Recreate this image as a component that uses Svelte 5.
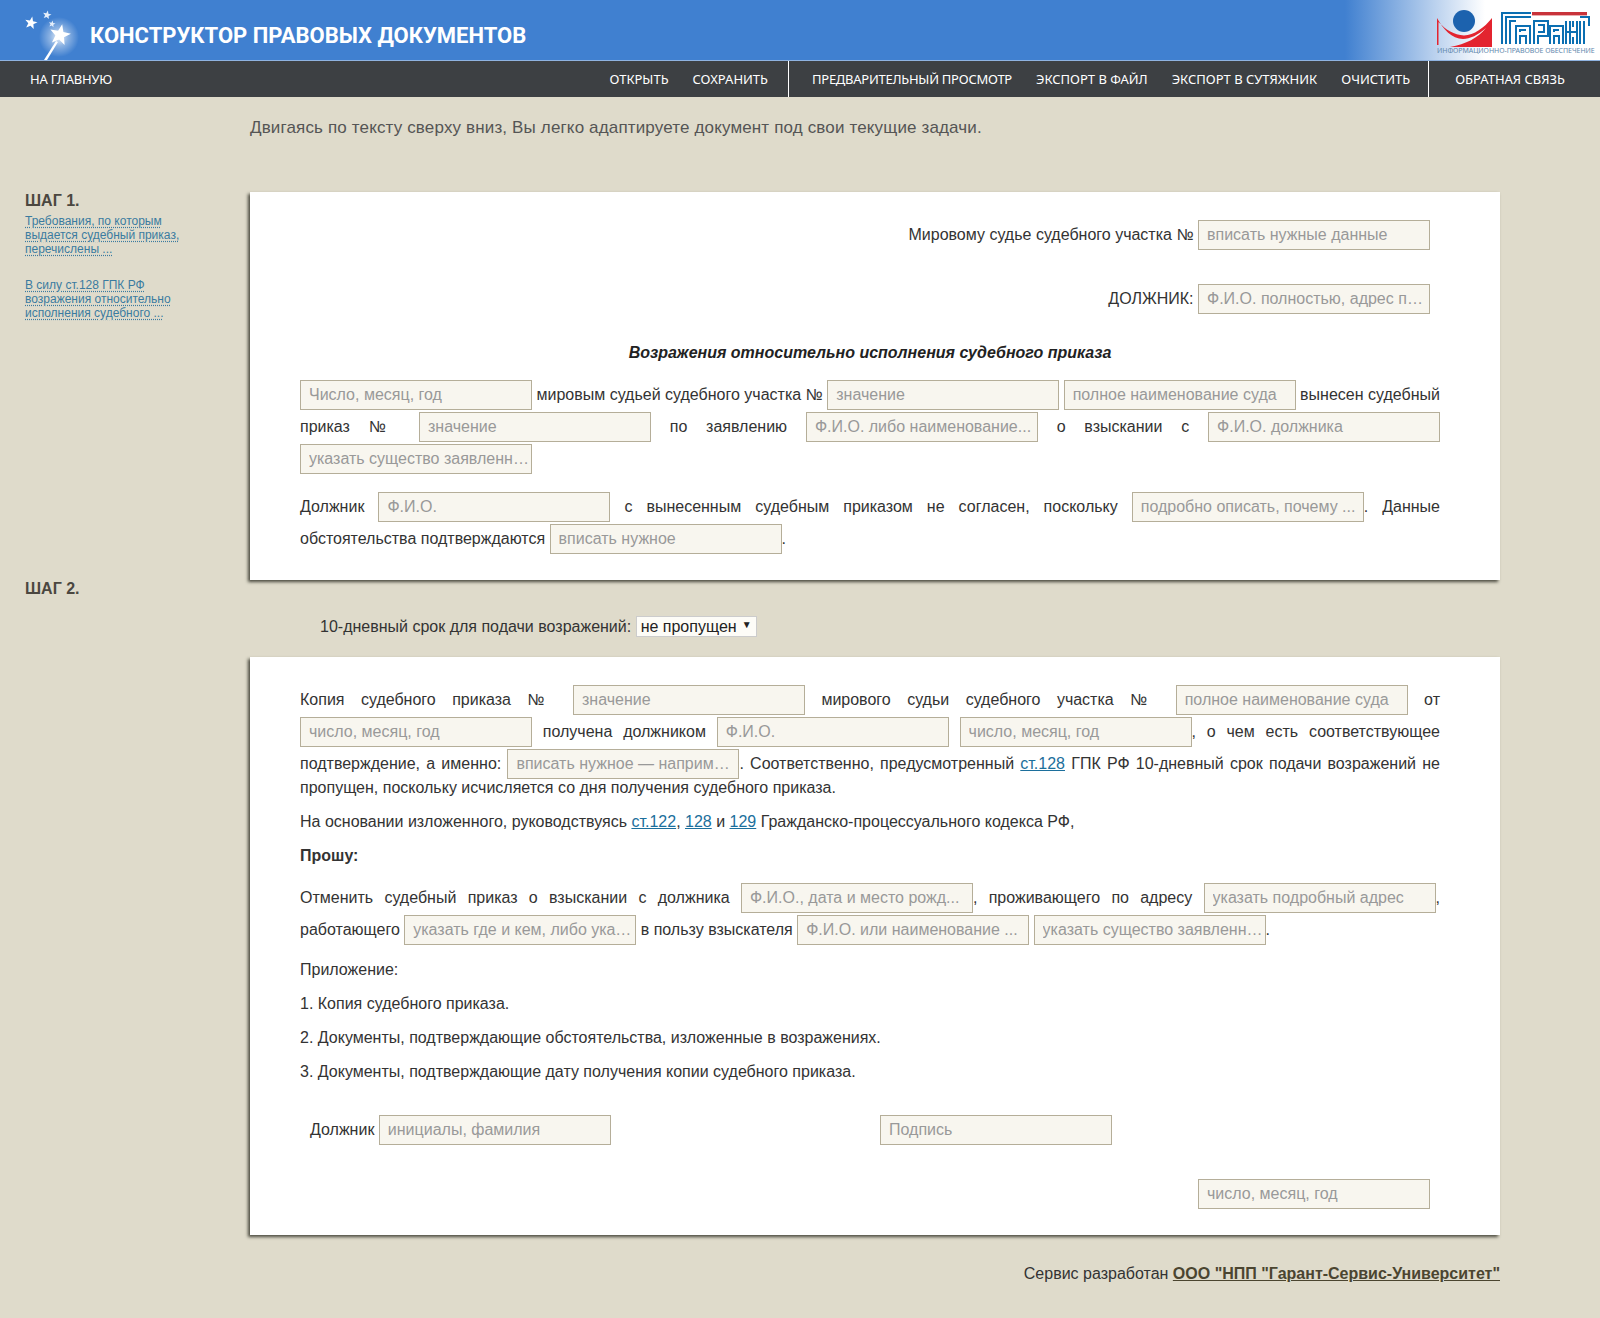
<script>
  const navGroups = [
    ['ОТКРЫТЬ', 'СОХРАНИТЬ'],
    ['ПРЕДВАРИТЕЛЬНЫЙ ПРОСМОТР', 'ЭКСПОРТ В ФАЙЛ', 'ЭКСПОРТ В СУТЯЖНИК', 'ОЧИСТИТЬ'],
    ['ОБРАТНАЯ СВЯЗЬ']
  ];
  const star = (cx, cy, r) => {
    let pts = [];
    for (let i = 0; i < 10; i++) {
      const rr = i % 2 ? r * 0.42 : r;
      const a = -Math.PI / 2 + (i * Math.PI) / 5 + 0.2;
      pts.push((cx + rr * Math.cos(a)).toFixed(1) + ',' + (cy + rr * Math.sin(a)).toFixed(1));
    }
    return pts.join(' ');
  };
</script>

<header class="top">
  <svg class="wand" width="80" height="60" viewBox="0 0 80 60" aria-hidden="true">
    <defs>
      <radialGradient id="glow">
        <stop offset="0" stop-color="#fff" stop-opacity="0.9" />
        <stop offset="0.45" stop-color="#fff" stop-opacity="0.4" />
        <stop offset="1" stop-color="#fff" stop-opacity="0" />
      </radialGradient>
    </defs>
    <circle cx="59" cy="37" r="20" fill="url(#glow)" />
    <path d="M44 60 L56 41 L58 42 L47 60 Z" fill="#fff" />
    <polygon points={star(60, 35, 11)} fill="#fff" />
    <polygon points={star(31, 23, 6.5)} fill="#fff" />
    <polygon points={star(47, 15, 4.5)} fill="#e4eefa" />
    <polygon points={star(52, 24, 3.5)} fill="#e4eefa" />
  </svg>
  <h1>КОНСТРУКТОР ПРАВОВЫХ ДОКУМЕНТОВ</h1>
  <div class="logo">
    <svg width="164" height="40" viewBox="0 0 164 40" aria-hidden="true">
      <circle cx="28" cy="13" r="11" fill="#1c62ae" />
      <path d="M1 10 L1 37 L2.5 37 L2.5 14 C10 22 18 27 28 27.5 C38 27 48 20 56 10 L56 39 L14 39 C30 36 42 30 50 20 C42 27 34 31 27 31 C16 31 7 21 1 10 Z" fill="#e3242f" />
      <g fill="none" stroke="#0b6fb2" stroke-width="2">
        <path d="M66 36 V5 H95 M70 36 V9 H95 M74 36 V13 H80" />
        <path d="M80 36 V18 H94 V36 M84 36 V28 H90 V36 M84 24 V22 H90" />
        <path d="M98 36 V13 H112 V28 H102 V36 M102 17 H108 V24 H102" />
        <path d="M114 36 V18 H127 V36 M118 36 V28 H123 V36 M118 24 V22 H123" />
        <path d="M130 36 V13 M134 36 V13 M130 24 H141 M141 36 V13 M137 36 V29 M137 19 V13" />
        <path d="M144 9 H153 V18 M148 36 V13 M144 13 V36" />
      </g>
      <rect x="96" y="4" width="55" height="3.4" fill="#c8333a" />
    </svg>
    <span>ИНФОРМАЦИОННО-ПРАВОВОЕ ОБЕСПЕЧЕНИЕ</span>
  </div>
</header>

<nav class="nav">
  <a class="home" href="#home">НА ГЛАВНУЮ</a>
  <div class="nav-right">
    {#each navGroups as group}
      <div class="group">
        {#each group as item}<a href="#item" class:tight={item.length > 20}>{item}</a>{/each}
      </div>
    {/each}
  </div>
</nav>

<main class="page">
  <p class="intro">Двигаясь по тексту сверху вниз, Вы легко адаптируете документ под свои текущие задачи.</p>

  <div class="grid">
    <aside class="step">
      <h2>ШАГ 1.</h2>
      <div class="hints">
        <a href="#h1">Требования, по которым<br />выдается судебный приказ,<br />перечислены ...</a>
        <a href="#h2">В силу ст.128 ГПК РФ<br />возражения относительно<br />исполнения судебного ...</a>
      </div>
    </aside>

    <section class="card one">
      <p class="addr">Мировому судье судебного участка № <input placeholder="вписать нужные данные" /></p>
      <p class="addr second">ДОЛЖНИК: <input placeholder="Ф.И.О. полностью, адрес проживания" /></p>
      <h3>Возражения относительно исполнения судебного приказа</h3>
      <p class="block">
        <input placeholder="Число, месяц, год" /> мировым судьей судебного участка № <input placeholder="значение" />
        <input placeholder="полное наименование суда" /> вынесен судебный приказ № <input placeholder="значение" />
        по заявлению <input placeholder="Ф.И.О. либо наименование..." /> о взыскании с
        <input placeholder="Ф.И.О. должника" /> <input placeholder="указать существо заявленного требования" />
      </p>
      <p class="block">
        Должник <input placeholder="Ф.И.О." /> с вынесенным судебным приказом не согласен, поскольку
        <input placeholder="подробно описать, почему ..." />. Данные обстоятельства подтверждаются
        <input placeholder="вписать нужное" />.
      </p>
    </section>

    <aside class="step two"><h2>ШАГ 2.</h2></aside>

    <div class="rest">
      <div class="term">
        10-дневный срок для подачи возражений:
        <span class="select-wrap">
          <select><option>не пропущен</option><option>пропущен</option></select>
          <span class="caret">▼</span>
        </span>
      </div>

      <section class="card twoc">
        <p class="j">
          Копия судебного приказа № <input placeholder="значение" /> мирового судьи судебного участка №
          <input placeholder="полное наименование суда" /> от <input placeholder="число, месяц, год" />
          получена должником <input placeholder="Ф.И.О." /> <input placeholder="число, месяц, год" />, о чем есть
          соответствующее подтверждение, а именно: <input placeholder="вписать нужное — например, расписка" />.
          Соответственно, предусмотренный <a href="#a">ст.128</a> ГПК РФ 10-дневный срок подачи возражений не
          пропущен, поскольку исчисляется со дня получения судебного приказа.
        </p>
        <p>На основании изложенного, руководствуясь <a href="#a">ст.122</a>, <a href="#a">128</a> и <a href="#a">129</a> Гражданско-процессуального кодекса РФ,</p>
        <p><b>Прошу:</b></p>
        <p class="j req">
          Отменить судебный приказ о взыскании с должника <input placeholder="Ф.И.О., дата и место рожд..." />,
          проживающего по адресу <input placeholder="указать подробный адрес" />, работающего
          <input placeholder="указать где и кем, либо указать" /> в пользу взыскателя
          <input placeholder="Ф.И.О. или наименование ..." /> <input placeholder="указать существо заявленного требования" />.
        </p>
        <p>Приложение:</p>
        <p>1. Копия судебного приказа.</p>
        <p>2. Документы, подтверждающие обстоятельства, изложенные в возражениях.</p>
        <p>3. Документы, подтверждающие дату получения копии судебного приказа.</p>
        <div class="sign">
          <span class="who">Должник <input placeholder="инициалы, фамилия" /></span>
          <input placeholder="Подпись" />
        </div>
        <div class="date"><input placeholder="число, месяц, год" /></div>
      </section>

      <footer class="foot">Сервис разработан <a href="#f">ООО "НПП "Гарант-Сервис-Университет"</a></footer>
    </div>
  </div>
</main>

<style>
  :global(body) {
    margin: 0;
    background: #dfdbcb;
    font-family: "Liberation Sans", Arial, sans-serif;
    font-size: 16px;
    color: #333;
  }
  .top {
    position: relative;
    height: 60px;
    border-bottom: 1px solid #8fb3e0;
    background: linear-gradient(90deg, #4080d0 0, #4080d0 1345px, #ffffff 1485px);
    display: flex;
    align-items: center;
    padding-left: 90px;
  }
  .wand { position: absolute; left: 0; top: 0; }
  h1 {
    margin: 11px 0 0;
    font: 700 22px Roboto, sans-serif;
    color: #fff;
    position: relative;
  }
  .logo {
    position: absolute;
    left: 1436px;
    top: 8px;
    width: 164px;
    height: 50px;
  }
  .logo svg { display: block; }
  .logo span {
    position: absolute;
    left: 1px;
    top: 38px;
    font: 7px/10px "Noto Sans", sans-serif;
    letter-spacing: -0.05px;
    white-space: nowrap;
    color: #5f88ad;
  }
  .nav {
    height: 36px;
    background: #3d4043;
    display: flex;
    justify-content: space-between;
    font: 13px/36px "Noto Sans", sans-serif;
  }
  .nav a { color: #fff; text-decoration: none; }
  .nav a.tight { letter-spacing: -0.25px; }
  .home { padding-left: 30px; letter-spacing: -0.2px; }
  .nav-right { display: flex; }
  .group { display: flex; gap: 24px; padding: 0 18px 0 23px; border-left: 1px solid #fff; }
  .group:first-child { border-left: 0; padding-right: 20px; }
  .group:last-child { padding: 0 35px 0 26px; }
  .page { padding-bottom: 40px; }
  .intro {
    margin: 0;
    padding: 21px 0 0 250px;
    height: 74px;
    line-height: 20px;
    color: #555;
    font-size: 17px;
    letter-spacing: 0.15px;
  }
  .grid { display: grid; grid-template-columns: 250px 1250px; }
  .step { padding-left: 25px; }
  h2 { margin: 0; font-size: 16px; line-height: 18px; color: #4b4740; }
  .hints { display: flex; flex-direction: column; gap: 22px; margin-top: 4px; font-size: 12px; line-height: 14px; }
  .hints a {
    color: #3b7ba0;
    text-decoration: underline dotted;
    text-underline-offset: 2px;
  }
  .card {
    background: #fff;
    box-shadow: -2px 2px 3px rgba(50, 50, 40, 0.85);
    line-height: 24px;
  }
  .one { padding: 23px 60px 29px 50px; }
  .twoc { padding: 23px 60px 29px 50px; }
  p { margin: 0 0 10px; }
  input {
    box-sizing: border-box;
    width: 232px;
    height: 30px;
    margin: 5px 0 -3px;
    padding: 0 0 0 8px;
    border: 1px solid #b5ae99;
    background: #f8f6ef;
    font: 16px "Liberation Sans", Arial, sans-serif;
    vertical-align: baseline;
    text-overflow: ellipsis;
    border-radius: 0;
    outline: 0;
  }
  input::placeholder { color: #999; opacity: 1; }
  .addr { text-align: right; padding-right: 10px; margin-bottom: 32px; }
  .addr.second { margin-bottom: 30px; }
  h3 { margin: 0 0 10px; font-size: 16px; font-style: italic; text-align: center; line-height: 24px; color: #222; }
  .block, .j { text-align: justify; }
  .block { margin-bottom: 16px; }
  .block:last-child { margin-bottom: 0; }
  .term { padding: 36px 0 0 70px; height: 41px; line-height: 22px; }
  .select-wrap { position: relative; display: inline-block; vertical-align: top; }
  select {
    appearance: none;
    box-sizing: border-box;
    width: 121px;
    height: 21px;
    padding: 0 0 0 4px;
    border: 1px solid #ccc;
    border-radius: 0;
    background: #fdfcf7;
    font: 16px "Liberation Sans", Arial, sans-serif;
    color: #222;
  }
  .caret { position: absolute; right: 5px; top: 0; font-size: 10px; line-height: 18px; color: #222; }
  .card a { color: #1c6f9c; }
  .req { margin-top: 10px; margin-bottom: 16px; }
  .sign { display: flex; margin-top: 26px; padding-left: 10px; }
  .who { width: 570px; }
  .date { text-align: right; padding-right: 10px; margin-top: 32px; }
  .foot { text-align: right; padding-top: 28px; line-height: 22px; color: #333; }
  .foot a { color: #4b4530; font-weight: 700; }
</style>
